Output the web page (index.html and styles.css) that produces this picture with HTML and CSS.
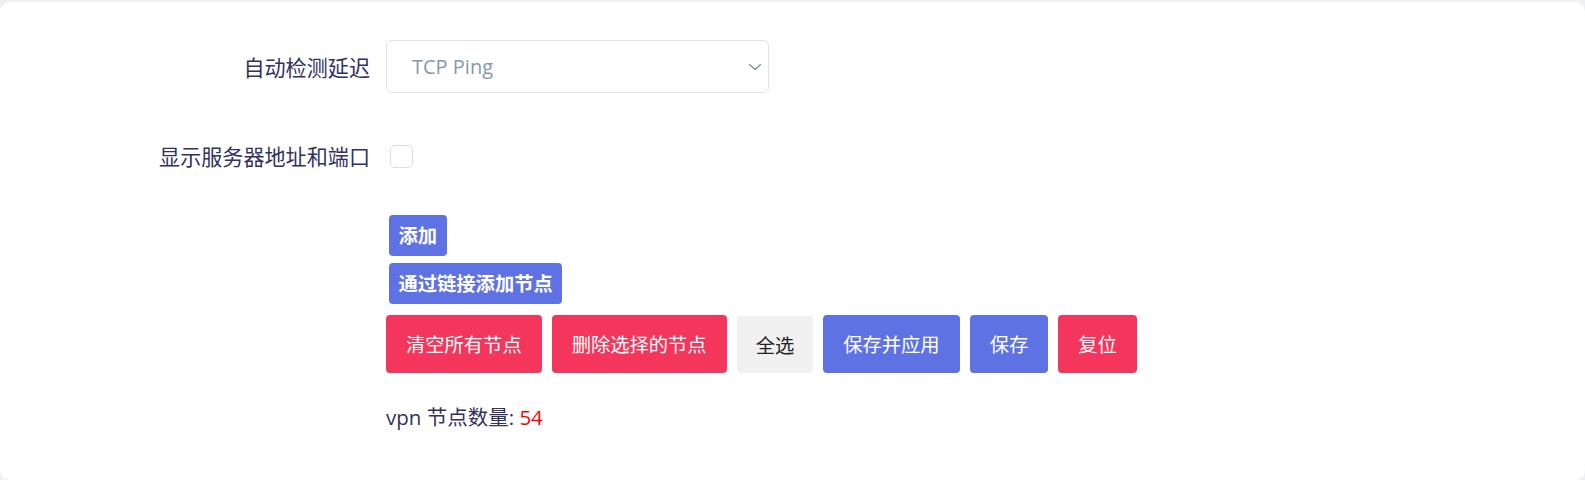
FILE: index.html
```html
<!DOCTYPE html>
<html lang="zh">
<head>
<meta charset="utf-8">
<link rel="stylesheet" href="styles.css">
</head>
<body>
<div class="card">
  <div class="row row-select">
    <label class="title">自动检测延迟</label>
    <div class="field">
      <div class="select-wrap">
        <select class="select">
          <option>TCP Ping</option>
        </select>
        <svg class="chev" width="14" height="8" viewBox="0 0 14 8"><path d="M1.5 1.5 L7 6.5 L12.5 1.5" fill="none" stroke="#8898aa" stroke-width="1.6" stroke-linecap="round" stroke-linejoin="round"/></svg>
      </div>
    </div>
  </div>
  <div class="row row-check">
    <label class="title">显示服务器地址和端口</label>
    <div class="field">
      <span class="checkbox"></span>
    </div>
  </div>
  <div class="actions">
    <div><button class="btn-add">添加</button></div>
    <div><button class="btn-add">通过链接添加节点</button></div>
    <div class="btn-row">
      <button class="btn red">清空所有节点</button>
      <button class="btn red">删除选择的节点</button>
      <button class="btn gray">全选</button>
      <button class="btn blue">保存并应用</button>
      <button class="btn blue">保存</button>
      <button class="btn red">复位</button>
    </div>
    <div class="count">vpn 节点数量: <span class="num">54</span></div>
  </div>
</div>
</body>
</html>
```
FILE: styles.css
```css
* { box-sizing: border-box; }
html, body { margin: 0; padding: 0; }
body {
  background: #eff0f4;
  font-family: "Open Sans", "Noto Sans CJK SC", sans-serif;
  color: #32325d;
  height: 480px;
  overflow: hidden;
}
.card {
  margin-top: 2px;
  background: #fff;
  border-radius: 10px;
  height: 478px;
  padding-top: 38px;
}
.row {
  display: flex;
  align-items: center;
}
.title {
  width: 370px;
  text-align: right;
  font-family: "Noto Sans CJK SC", sans-serif;
  font-size: 21.1px;
  color: #32325d;
  margin-right: 16px;
}
.row-select { height: 53px; }
.select-wrap {
  position: relative;
  width: 383px;
  height: 53px;
}
.select {
  appearance: none;
  -webkit-appearance: none;
  width: 100%;
  height: 100%;
  border: 1px solid #dfe2e8;
  border-radius: 6px;
  background: #fff;
  padding: 0 0 0 25px;
  font-family: "Open Sans", "Noto Sans CJK SC", sans-serif;
  font-size: 20px;
  color: #8898aa;
  outline: none;
}
.chev {
  position: absolute;
  right: 7px;
  top: 23px;
}
.row-check {
  margin-top: 51px;
  height: 24px;
}
.checkbox {
  display: block;
  width: 23px;
  height: 23px;
  margin-left: 4px;
  border: 1px solid #dadde3;
  border-radius: 5px;
  background: #fff;
}
.actions {
  margin-left: 386px;
  margin-top: 47px;
}
.btn-add {
  display: inline-block;
  margin: 0 0 7px 3px;
  height: 41px;
  padding: 0 9.5px;
  border: none;
  border-radius: 4px;
  background: #5e72e4;
  color: #fff;
  font-family: "Noto Sans CJK SC", sans-serif;
  font-weight: 700;
  font-size: 19.3px;
  line-height: 41px;
}
.btn-row {
  display: flex;
  gap: 10px;
  margin-top: 4px;
}
.btn {
  height: 58px;
  padding: 0 20px;
  border: none;
  border-radius: 4px;
  font-family: "Noto Sans CJK SC", sans-serif;
  font-size: 19.3px;
  color: #fff;
}
.btn.red { background: #f5365c; }
.btn.blue { background: #5e72e4; }
.btn.gray { background: #f0f0f0; color: #222; height: 57px; margin-top: 1px; padding: 0 19px; }
.count {
  margin-top: 28px;
  font-family: "Open Sans", "Noto Sans CJK SC", sans-serif;
  font-size: 20.5px;
  color: #32325d;
}
.num { color: #ff0000; }
```
